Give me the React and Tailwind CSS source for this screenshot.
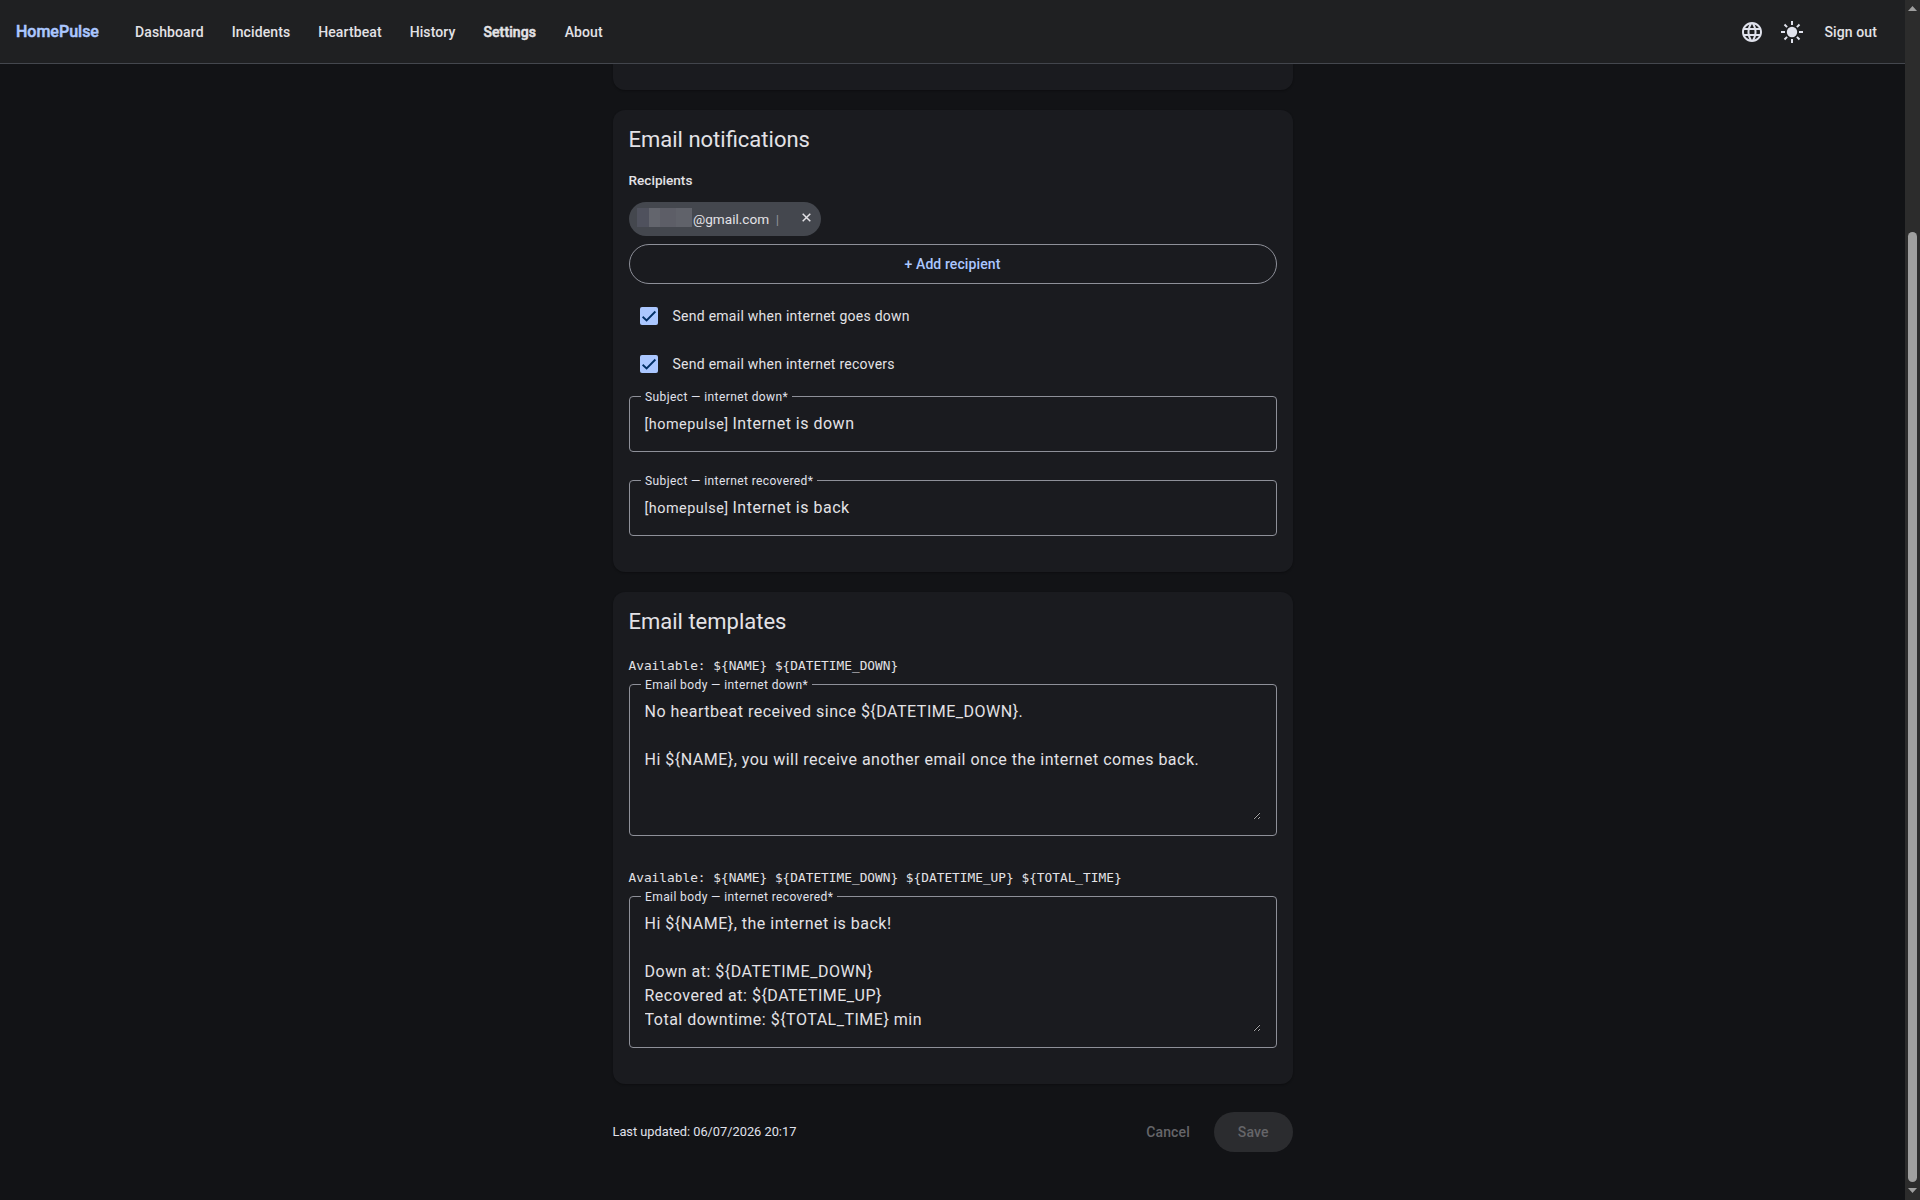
import React from "react";
import { MdLanguage } from "react-icons/md";

const NAV = ["Dashboard", "Incidents", "Heartbeat", "History", "Settings", "About"];

function SunIcon() {
  return (
    <svg viewBox="0 0 24 24" className="size-6" fill="none" stroke="currentColor" strokeWidth="2">
      <circle cx="12" cy="12" r="5.2" fill="currentColor" stroke="none" />
      <path d="M12 1v4M12 19v4M1 12h4M19 12h4M4.5 4.5l2.6 2.6M16.9 16.9l2.6 2.6M4.5 19.5l2.6-2.6M16.9 7.1l2.6-2.6" />
    </svg>
  );
}

function Header() {
  return (
    <header className="flex h-16 shrink-0 items-center border-b border-[#44474e] bg-[#1f2022] px-4 text-sm font-medium text-[#e3e2e6]">
      <span className="w-[107px] text-base text-[#abc7ff] [-webkit-text-stroke:0.5px]">HomePulse</span>
      <nav className="flex flex-1 gap-1">
        {NAV.map((n) => (
          <a
            key={n}
            className={
              n === "Settings"
                ? "mr-[0.6px] px-3 tracking-[0.1px] [-webkit-text-stroke:0.5px]"
                : "px-3 tracking-[0.1px]"
            }
          >
            {n}
          </a>
        ))}
      </nav>
      <button className="flex size-10 items-center justify-center text-[#e0e2ec]">
        <MdLanguage size={24} />
      </button>
      <button className="mr-[0.8px] flex size-10 items-center justify-center text-[#e0e2ec]">
        <SunIcon />
      </button>
      <button className="px-3 tracking-[0.1px]">Sign out</button>
    </header>
  );
}

function Card({ title, children }) {
  return (
    <section className="mb-5 rounded-xl bg-[#1a1b1f] p-4 shadow-[0_1px_2px_rgba(0,0,0,0.3)]">
      <h2 className="text-[22px] leading-7">{title}</h2>
      {children}
    </section>
  );
}

function Check({ children }) {
  return (
    <label className="flex h-12 items-center pl-[11px] text-sm tracking-[0.26px]">
      <span className="mr-[15px] flex size-[18px] items-center justify-center rounded-[2px] bg-[#abc7ff]">
        <svg viewBox="0 0 24 24" className="size-[18px]" fill="none" stroke="#002f65" strokeWidth="2.4">
          <path d="M3.5 13 8.8 18 20.5 6" />
        </svg>
      </span>
      {children}
    </label>
  );
}

function Field({ label, children }) {
  return (
    <div className="relative rounded border border-[#8e9099] px-[15px] py-[15px] text-base leading-6 tracking-[0.5px]">
      <span className="absolute -top-2 left-[11px] bg-[#1a1b1f] pr-1 pl-[4.5px] text-xs leading-4 tracking-[0.4px] text-[#e0e2ec]">
        {label}
      </span>
      {children}
    </div>
  );
}

function Area({ label, value }) {
  return (
    <Field label={label}>
      <textarea
        className="block h-[120px] w-full resize overflow-auto bg-transparent p-0 outline-none [color-scheme:dark]"
        rows={5}
        defaultValue={value}
        spellCheck={false}
      />
    </Field>
  );
}

function Subject({ label, text }) {
  return (
    <Field label={label}>
      <div className="flex h-6 items-baseline">
        <span className="w-[88px] text-[14.4px]">[homepulse]</span>
        <span>{text}</span>
      </div>
    </Field>
  );
}

function Scrollbar() {
  return (
    <div className="flex w-[15px] shrink-0 flex-col items-center bg-[#2c2c2c] pt-[6px] pb-[7px]">
      <svg className="h-[5px] w-[9px] shrink-0" viewBox="0 0 9 5" fill="#9f9f9f"><path d="M0 5 4.5 0 9 5z" /></svg>
      <div className="mt-[221px] mb-[6px] w-[9px] flex-1 rounded-full bg-[#9f9f9f]" />
      <svg className="h-[5px] w-[9px] shrink-0" viewBox="0 0 9 5" fill="#9f9f9f"><path d="M0 0 4.5 5 9 0z" /></svg>
    </div>
  );
}

export default function App() {
  return (
    <div className="flex h-[1200px] w-[1920px] overflow-hidden bg-[#121316] font-[Roboto,sans-serif] text-[#e3e2e6]">
      <div className="flex flex-1 flex-col">
        <Header />
        <main className="mx-auto w-[680px]">
          <div className="mb-5 h-[26px] rounded-b-xl bg-[#1a1b1f] shadow-[0_1px_2px_rgba(0,0,0,0.3)]" />
          <Card title="Email notifications">
            <h3 className="mt-4 text-[13.6px] leading-5 font-medium">Recipients</h3>
            <div className="mt-3 flex h-[34px] w-[192.5px] items-center rounded-full bg-[#44474e] pl-2 text-[13.6px]">
              <span className="mb-[3px] flex h-[19px] w-[55px]">
                <span className="w-3 bg-[#4f515d]" />
                <span className="w-[11px] bg-[#63656d]" />
                <span className="w-4 bg-[#5d5e67]" />
                <span className="w-4 bg-[#60626a]" />
              </span>
              <span className="mt-px ml-[1.5px]">@gmail.com</span>
              <span className="mt-px ml-[6.5px] text-[#8e9099]">|</span>
              <svg className="mb-[3px] ml-[23.5px] size-[9px]" viewBox="0 0 9 9" stroke="#e3e2e6" strokeWidth="1.5"><path d="M.7.7 8.3 8.3M8.3.7.7 8.3" /></svg>
            </div>
            <button className="mt-2 block h-10 w-full rounded-full border border-[#8e9099] text-sm font-medium tracking-[0.1px] text-[#abc7ff]">
              + Add recipient
            </button>
            <div className="mt-2 mb-2">
              <Check>Send email when internet goes down</Check>
              <Check>Send email when internet recovers</Check>
            </div>
            <div className="flex flex-col gap-7 pb-5">
              <Subject label="Subject — internet down*" text="Internet is down" />
              <Subject label="Subject — internet recovered*" text="Internet is back" />
            </div>
          </Card>
          <Card title="Email templates">
            <p className="mt-5 mb-2 font-['DejaVu_Sans_Mono',monospace] text-[12.8px] leading-5">{"Available: ${NAME} ${DATETIME_DOWN}"}</p>
            <Area
              label="Email body — internet down*"
              value={"No heartbeat received since ${DATETIME_DOWN}.\n\nHi ${NAME}, you will receive another email once the internet comes back."}
            />
            <p className="mt-8 mb-2 font-['DejaVu_Sans_Mono',monospace] text-[12.8px] leading-5">{"Available: ${NAME} ${DATETIME_DOWN} ${DATETIME_UP} ${TOTAL_TIME}"}</p>
            <Area
              label="Email body — internet recovered*"
              value={"Hi ${NAME}, the internet is back!\n\nDown at: ${DATETIME_DOWN}\nRecovered at: ${DATETIME_UP}\nTotal downtime: ${TOTAL_TIME} min"}
            />
            <div className="h-5" />
          </Card>
          <footer className="mt-7 flex h-10 items-center text-sm font-medium tracking-[0.1px] text-[#656569]">
            <span className="flex-1 text-[12.8px] font-normal tracking-normal text-[#e0e2ec]">Last updated: 06/07/2026 20:17</span>
            <button className="mr-2 px-4">Cancel</button>
            <button className="h-10 rounded-full bg-[#2b2c2f] px-6">Save</button>
          </footer>
        </main>
      </div>
      <Scrollbar />
    </div>
  );
}
